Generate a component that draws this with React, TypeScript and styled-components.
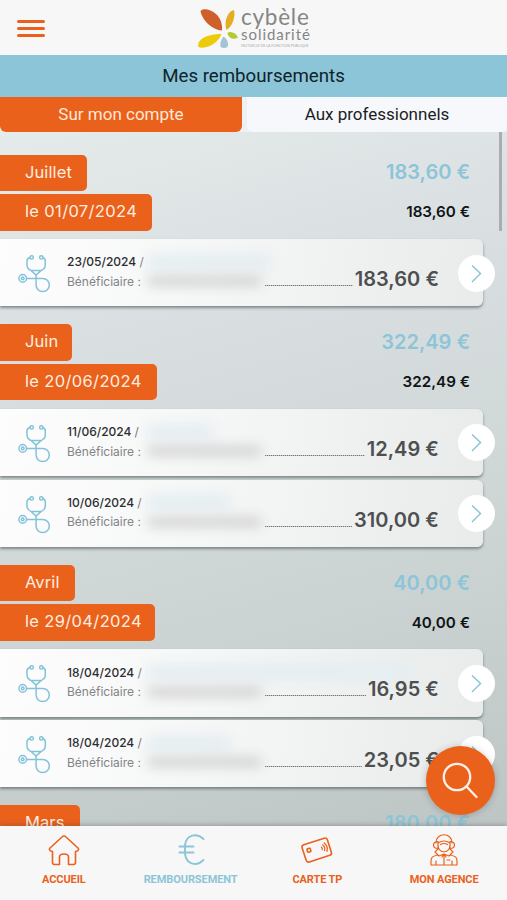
import React from "react";
import styled, { createGlobalStyle } from "styled-components";

const ORANGE = "#ea611b";
const BLUE = "#8cc5d8";

const GlobalStyle = createGlobalStyle`
  * { box-sizing: border-box; }
  body { margin: 0; font-family: Inter, "Liberation Sans", sans-serif; }
`;

const Screen = styled.div`
  width: 507px;
  height: 900px;
  display: flex;
  flex-direction: column;
  overflow: hidden;
  background: #f7f7f7;
`;

const Header = styled.header`
  height: 55px;
  flex: none;
  display: grid;
  grid-template-columns: 197px 1fr;
  align-items: start;
`;

const MenuButton = styled.button`
  width: 28px;
  margin: 20px 0 0 17px;
  padding: 0;
  border: 0;
  background: none;
  display: flex;
  flex-direction: column;
  gap: 4.5px;
`;

const MenuLine = styled.span`
  height: 2.5px;
  border-radius: 2px;
  background: ${ORANGE};
`;

const Brand = styled.div`
  display: flex;
  padding-top: 8px;
  gap: 2px;
`;

const BrandText = styled.div`
  display: flex;
  flex-direction: column;
  color: #858585;
  white-space: nowrap;
`;

const BrandLine = styled.span<{ $size: number; $height: number; $spacing: number; $faint?: boolean }>`
  font-family: Lato, sans-serif;
  font-size: ${(p) => p.$size}px;
  line-height: ${(p) => p.$height}px;
  letter-spacing: ${(p) => p.$spacing}px;
  color: ${(p) => (p.$faint ? "#aaa" : "inherit")};
`;

const TitleBar = styled.h1`
  margin: 0;
  height: 42px;
  padding-bottom: 1px;
  flex: none;
  display: flex;
  align-items: center;
  justify-content: center;
  background: ${BLUE};
  color: #10232b;
  font: 400 18.7px Roboto, sans-serif;
`;

const Tabs = styled.div`
  height: 34.5px;
  flex: none;
  display: grid;
  grid-template-columns: 242px 260px;
  gap: 5px;
  background: #eef1f3;
`;

const Tab = styled.button<{ $active?: boolean }>`
  border: 0;
  border-radius: 0 0 6px 6px;
  padding: 0 0 1px;
  background: ${(p) => (p.$active ? ORANGE : "#f7f8fc")};
  color: ${(p) => (p.$active ? "#ffe9d8" : "#1c1c1e")};
  font: 400 17px Roboto, sans-serif;
`;

const Scroller = styled.main`
  position: relative;
  flex: 1;
  min-height: 0;
  overflow: hidden;
  padding-top: 23px;
  display: flex;
  flex-direction: column;
  gap: 18px;
  background: linear-gradient(165deg, #e5eaeb 0%, #d9dfe0 28%, #ced5d5 62%, #bec6c5 100%);
`;

const ScrollThumb = styled.div`
  position: absolute;
  top: 0;
  right: 5px;
  width: 3.5px;
  height: 99px;
  background: #aaadb0;
`;

const Group = styled.section`
  flex: none;
  display: flex;
  flex-direction: column;
  gap: 3px;
`;

const SummaryRow = styled.div`
  height: 36.5px;
  display: flex;
  align-items: center;
  justify-content: space-between;
  padding-right: 37px;
`;

const Tag = styled.span<{ $width: number; $spacing?: number }>`
  width: ${(p) => p.$width}px;
  height: 100%;
  padding-left: 25px;
  border-radius: 0 5px 5px 0;
  background: ${ORANGE};
  color: #ffeee0;
  font-size: 16.5px;
  line-height: 35px;
  letter-spacing: ${(p) => p.$spacing ?? 0.1}px;
  white-space: nowrap;
`;

const MonthTotal = styled.span`
  color: ${BLUE};
  font-size: 20px;
  line-height: 24px;
  padding-bottom: 1px;
  font-weight: 600;
`;

const DayTotal = styled.span`
  color: #111416;
  font-size: 15.2px;
  font-weight: 600;
  padding-bottom: 1px;
`;

const Cards = styled.div`
  display: flex;
  flex-direction: column;
  gap: 3.5px;
  padding-top: 5.5px;
`;

const CardItem = styled.article`
  position: relative;
  width: 483px;
  height: 67.3px;
  padding-left: 18px;
  display: grid;
  grid-template-columns: 49px 198px 174px;
  border-radius: 0 6px 6px 0;
  background: linear-gradient(100deg, #fdfdfd 0%, #f5f6f6 45%, #e9ebea 100%);
  box-shadow: 0 2px 3px rgba(70, 80, 80, 0.6);
`;

const CardIcon = styled.svg`
  width: 34px;
  height: 40px;
  margin-top: 15px;
  margin-left: -0.5px;
  fill: none;
  stroke: #83c3d9;
  stroke-width: 1.5;
`;

const CardText = styled.div`
  display: flex;
  flex-direction: column;
  padding-top: 13px;
`;

const TextLine = styled.div`
  height: 19.5px;
  display: grid;
  grid-template-columns: 81px auto;
  align-items: center;
  justify-content: start;
  white-space: nowrap;
`;

const CareDate = styled.span`
  color: #2c2e30;
  font-size: 12px;
  font-weight: 500;
  i { font-style: normal; font-weight: 400; color: #777; }
`;

const Beneficiary = styled.span`
  color: #828486;
  font-size: 12px;
`;

const Masked = styled.span<{ $width: number; $tone: "blue" | "gray" }>`
  width: ${(p) => p.$width}px;
  height: ${(p) => (p.$tone === "blue" ? 14 : 10)}px;
  background: ${(p) => (p.$tone === "blue" ? "#e3edf1" : "#d2d2d2")};
  filter: blur(6px);
`;

const AmountRow = styled.div`
  position: relative;
  display: flex;
  height: 22px;
  margin-top: 29px;
  gap: 2px;
  white-space: nowrap;
`;

const Leader = styled.span`
  flex: 1;
  height: 1px;
  margin-top: 17px;
  background: repeating-linear-gradient(90deg, #777 0 1px, #c3c5c5 1px 2px);
`;

const Amount = styled.span`
  color: #4d4f50;
  font-size: 20px;
  line-height: 22px;
  font-weight: 600;
  letter-spacing: 0.05px;
`;

const OpenButton = styled.button`
  position: absolute;
  top: 15.5px;
  right: -12px;
  width: 37px;
  height: 37px;
  padding: 0;
  border: 0;
  border-radius: 50%;
  background: #fff;
  svg { display: block; fill: none; stroke: #83c3d9; stroke-width: 1.4; }
`;

const SearchButton = styled.button`
  position: absolute;
  right: 12px;
  bottom: 11.5px;
  width: 69px;
  height: 69px;
  padding: 0;
  border: 0;
  border-radius: 50%;
  background: ${ORANGE};
  box-shadow: 0 1px 7px rgba(60, 60, 60, 0.3);
  svg { display: block; fill: none; stroke: #fff1e7; stroke-width: 2.3; stroke-linecap: round; }
`;

const Nav = styled.nav`
  position: relative;
  height: 74px;
  flex: none;
  display: grid;
  grid-template-columns: repeat(4, 126.75px);
  background: #f7f7f7;
  box-shadow: 0 -1px 5px rgba(60, 70, 70, 0.35);
`;

const NavItem = styled.a<{ $current?: boolean }>`
  display: flex;
  flex-direction: column;
  align-items: center;
  padding: 6px 0 0 1px;
  gap: 4px;
  color: ${(p) => (p.$current ? BLUE : ORANGE)};
  font: 700 11px/16px Roboto, sans-serif;
  letter-spacing: ${(p) => (p.$current ? -0.08 : -0.1)}px;
  white-space: nowrap;
  svg { fill: none; stroke: currentColor; stroke-width: 1.6; stroke-linecap: round; stroke-linejoin: round; }
`;

type Care = { date: string; amount: string; mask: number };
type Month = { name: string; nameWidth: number; day?: string; dayWidth?: number; total: string; cares: Care[] };

const months: Month[] = [
  { name: "Juillet", nameWidth: 86.5, day: "le 01/07/2024", dayWidth: 151.5, total: "183,60 €", cares: [{ date: "23/05/2024", amount: "183,60 €", mask: 122 }] },
  {
    name: "Juin", nameWidth: 72, day: "le 20/06/2024", dayWidth: 156.5, total: "322,49 €",
    cares: [
      { date: "11/06/2024", amount: "12,49 €", mask: 65 },
      { date: "10/06/2024", amount: "310,00 €", mask: 82 },
    ],
  },
  {
    name: "Avril", nameWidth: 74.5, day: "le 29/04/2024", dayWidth: 155, total: "40,00 €",
    cares: [
      { date: "18/04/2024", amount: "16,95 €", mask: 268 },
      { date: "18/04/2024", amount: "23,05 €", mask: 82 },
    ],
  },
  { name: "Mars", nameWidth: 79.5, total: "180,00 €", cares: [] },
];

function Stethoscope() {
  return (
    <CardIcon viewBox="0 0 34 40">
      <circle cx="13.7" cy="3.4" r="1.7" />
      <circle cx="23.3" cy="3.4" r="1.7" />
      <path d="M12 3.6Q9 4.2 9 7v4c0 3 1.2 4.3 4.2 5.6l4.9 4.4 4.9-4.4c3-1.3 4.3-2.6 4.3-5.6V7q0-2.8-2.8-3.4M13 16.6h10.2" />
      <circle cx="4.7" cy="24.4" r="3.8" />
      <circle cx="4.7" cy="24.4" r="1.3" />
      <path d="M8.5 24.4h16.2a6.6 6.6 0 1 1-6.6 6.6V21" />
    </CardIcon>
  );
}

function CareCard({ date, amount, mask }: Care) {
  return (
    <CardItem>
      <Stethoscope />
      <CardText>
        <TextLine>
          <CareDate>{date} <i>/</i></CareDate>
          <Masked $width={mask} $tone="blue" />
        </TextLine>
        <TextLine>
          <Beneficiary>Bénéficiaire :</Beneficiary>
          <Masked $width={113} $tone="gray" />
        </TextLine>
      </CardText>
      <AmountRow>
        <Leader />
        <Amount>{amount}</Amount>
      </AmountRow>
      <OpenButton aria-label="Ouvrir">
        <svg width="37" height="37" viewBox="0 0 37 37"><path d="M14 10.5l8.5 8-8.5 8.5" /></svg>
      </OpenButton>
    </CardItem>
  );
}

function MonthGroup({ name, nameWidth, day, dayWidth, total, cares }: Month) {
  return (
    <Group>
      <SummaryRow>
        <Tag $width={nameWidth}>{name}</Tag>
        <MonthTotal>{total}</MonthTotal>
      </SummaryRow>
      {day && (
        <SummaryRow>
          <Tag $width={dayWidth ?? 150} $spacing={0.35}>{day}</Tag>
          <DayTotal>{total}</DayTotal>
        </SummaryRow>
      )}
      {cares.length > 0 && (
        <Cards>
          {cares.map((care, i) => <CareCard key={i} {...care} />)}
        </Cards>
      )}
    </Group>
  );
}

export default function App() {
  return (
    <>
      <GlobalStyle />
      <Screen>
        <Header>
          <MenuButton aria-label="Menu"><MenuLine /><MenuLine /><MenuLine /></MenuButton>
          <Brand>
            <svg width="42" height="42" viewBox="0 0 42 42">
              <path d="M3.500 3C6-.5 14 1.500 19 6c5 4.500 6.500 11 6 16.500C15 22 5 12 3.500 3Z" fill="#ce602b" />
              <path d="M37 2c1.500 6-1 16-7.500 20C27 15 29.500 3.500 37 2Z" fill="#e3ae22" />
              <path d="M1.300 39C0 31 10 26 24.500 26 22 34 10 42 1.300 39Z" fill="#eccb0b" />
              <path d="M30.300 25C34 22.500 39 25 41 29.500c-5 3-9.200.5-10.700-4.500Z" fill="#b6c933" />
              <path d="M26.500 28.500c3.500 2 6 7.500 3.800 10.500-1.700 1.300-4.500 1.200-6.800 0-.7-4 .8-8 3-10.500Z" fill="#a3c3da" />
            </svg>
            <BrandText>
              <BrandLine $size={22.5} $height={18} $spacing={0.75}>cybèle</BrandLine>
              <BrandLine $size={15} $height={17} $spacing={0.95}>solidarité</BrandLine>
              <BrandLine $size={3.6} $height={6} $spacing={0} $faint>MUTUELLE DE LA FONCTION PUBLIQUE</BrandLine>
            </BrandText>
          </Brand>
        </Header>
        <TitleBar>Mes remboursements</TitleBar>
        <Tabs>
          <Tab $active>Sur mon compte</Tab>
          <Tab>Aux professionnels</Tab>
        </Tabs>
        <Scroller>
          {months.map((month) => <MonthGroup key={month.name} {...month} />)}
          <ScrollThumb />
          <SearchButton aria-label="Rechercher">
            <svg width="69" height="69" viewBox="0 0 69 69"><circle cx="31" cy="31" r="13.2" /><path d="M40.500 40.500L50.500 51" /></svg>
          </SearchButton>
        </Scroller>
        <Nav>
          <NavItem>
            <svg width="34" height="36" viewBox="0 0 34 36">
              <path d="M17 4Q18 4 19 5L31.500 16.500Q32 19 28.500 19.500V30.500Q28.500 32.500 26.500 32.500H21.500V25Q21.500 22 17 22T12.500 25V32.500H7.500Q5.500 32.500 5.500 30.500V19.500Q2 19 2.500 16.500L15 5Q16 4 17 4Z" />
            </svg>
            ACCUEIL
          </NavItem>
          <NavItem $current>
            <svg width="34" height="36" viewBox="0 0 34 36"><path d="M29.500 7C23 1 12.500 2 11 13v9c1.500 11 12 12.500 18.500 6M5.500 14.500h14M5.500 20.500h14" strokeWidth="1.900" /></svg>
            REMBOURSEMENT
          </NavItem>
          <NavItem>
            <svg width="34" height="36" viewBox="0 0 34 36">
              <g transform="rotate(-18 17 18)">
                <rect x="3.500" y="9" width="26.500" height="18" rx="2.500" />
                <rect x="7.500" y="14" width="3.500" height="3.500" rx="1" />
                <path d="M22 16.500q1 1.500 0 3M24 15q2 3 0 6M26 13.500q3 4.500 0 9" strokeWidth="1.200" />
              </g>
            </svg>
            CARTE TP
          </NavItem>
          <NavItem>
            <svg width="34" height="36" viewBox="0 0 34 36">
              <g strokeWidth="1.200">
                <path d="M9 11C9 0 25 0 25 11M11 13v-2q6-4 12 0v2c0 9-12 9-12 0M11 9.500q-4.500 0-4.500 3.500t4.500 3.500zM23 9.500q4.500 0 4.500 3.500t-4.500 3.500zM13.500 12.500q3.500-2 7 0" />
                <path d="M11 17l-3 3 4 4 5-2 5 2 4-4-3-3M4 33v-4c0-4 2-5 7-6M30 33v-4c0-4-2-5-7-6M4 33h26M9 33v-4M25 33v-4M17 22v11M15 25l2-3 2 3M20 28h3" />
              </g>
            </svg>
            MON AGENCE
          </NavItem>
        </Nav>
      </Screen>
    </>
  );
}
